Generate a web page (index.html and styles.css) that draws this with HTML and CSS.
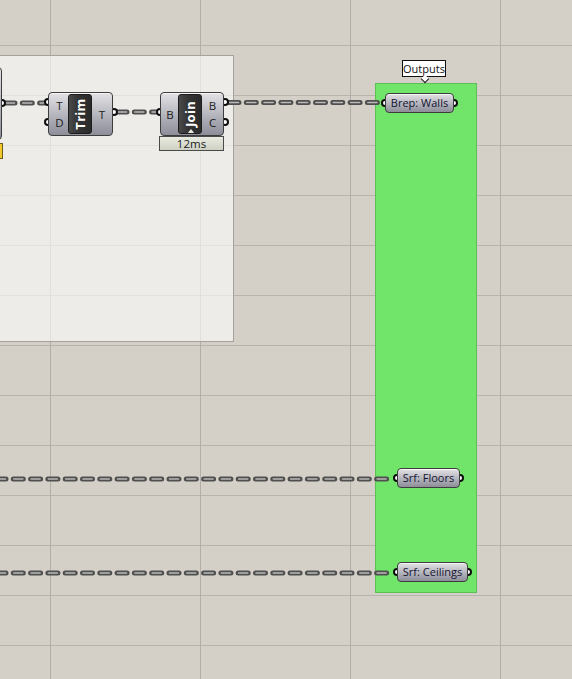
FILE: index.html
```html
<!DOCTYPE html>
<html>
<head>
<meta charset="utf-8">
<link rel="stylesheet" href="styles.css">
</head>
<body>
<div class="canvas">
  <div class="group group-left"></div>
  <div class="group group-green"></div>

  <svg class="wires" width="572" height="679" viewBox="0 0 572 679">
    <g class="wire">
      <line x1="5" y1="103" x2="45" y2="103"/>
      <line x1="117" y1="112" x2="157" y2="112"/>
      <line x1="229" y1="102.5" x2="382" y2="102.5"/>
      <line x1="-4" y1="479" x2="393" y2="479"/>
      <line x1="-4" y1="573" x2="393" y2="573"/>
    </g>
    <g class="wire-in">
      <line x1="5" y1="103" x2="45" y2="103"/>
      <line x1="117" y1="112" x2="157" y2="112"/>
      <line x1="229" y1="102.5" x2="382" y2="102.5"/>
      <line x1="-4" y1="479" x2="393" y2="479"/>
      <line x1="-4" y1="573" x2="393" y2="573"/>
    </g>
  </svg>

  <!-- cut-off component at left edge -->
  <div class="node n-left">
    <span class="port" style="left:58px;top:32px"></span>
    <div class="body"></div>
  </div>
  <div class="msg"></div>

  <!-- Trim -->
  <div class="node n-trim">
    <span class="port" style="left:-4px;top:6px"></span>
    <span class="port" style="left:-4px;top:26px"></span>
    <span class="port" style="left:62px;top:16px"></span>
    <div class="body">
      <div class="io in">
        <span>T</span>
        <span>D</span>
      </div>
      <div class="label"><span>Trim</span></div>
      <div class="io out">
        <span>T</span>
      </div>
    </div>
  </div>

  <!-- Join -->
  <div class="node n-join">
    <span class="port" style="left:-4px;top:16px"></span>
    <span class="port" style="left:61px;top:6px"></span>
    <span class="port" style="left:61px;top:26px"></span>
    <div class="body">
      <div class="io in">
        <span>B</span>
      </div>
      <div class="label"><span>Join</span><i class="notch"></i></div>
      <div class="io out">
        <span>B</span>
        <span>C</span>
      </div>
    </div>
    <div class="time">12ms</div>
  </div>

  <!-- Outputs tag -->
  <div class="tag">Outputs</div>

  <!-- params -->
  <div class="node param p-walls">
    <span class="port" style="left:-4px;top:6px"></span>
    <span class="port" style="left:65px;top:6px"></span>
    <div class="body pbody">Brep: Walls</div>
  </div>
  <div class="node param p-floors">
    <span class="port" style="left:-4px;top:6px"></span>
    <span class="port" style="left:59px;top:6px"></span>
    <div class="body pbody">Srf: Floors</div>
  </div>
  <div class="node param p-ceil">
    <span class="port" style="left:-4px;top:6px"></span>
    <span class="port" style="left:67px;top:6px"></span>
    <div class="body pbody">Srf: Ceilings</div>
  </div>
</div>
</body>
</html>
```
FILE: styles.css
```css
html, body {
  margin: 0;
  padding: 0;
  width: 572px;
  height: 679px;
  overflow: hidden;
}

.canvas {
  position: relative;
  z-index: 0;
  width: 572px;
  height: 679px;
  overflow: hidden;
  background-color: #d4d0c8;
  background-image:
    linear-gradient(to right, #b3afa8 0, #b3afa8 1px, transparent 1px),
    linear-gradient(to bottom, #b8b4ad 0, #b8b4ad 1px, transparent 1px);
  background-size: 150px 100%, 100% 50px;
  background-position: 50px 0, 0 45px;
  font-family: "Open Sans", "DejaVu Sans", sans-serif;
}

.group {
  position: absolute;
  box-sizing: border-box;
}

.group-left {
  left: -10px;
  top: 55px;
  width: 244px;
  height: 287px;
  background: rgba(255, 255, 255, 0.6);
  border: 1px solid #a3a19c;
}

.group-green {
  left: 375px;
  top: 83px;
  width: 102px;
  height: 510px;
  background: #71e46a;
  border: 1px solid #5cbf55;
}

.wires {
  position: absolute;
  left: 0;
  top: 0;
}

.wire line {
  stroke: #4f4f4f;
  stroke-width: 5;
  stroke-linecap: round;
  stroke-dasharray: 10 7.3;
}

.wire-in line {
  stroke: #b9b9b7;
  stroke-width: 1.6;
  stroke-linecap: round;
  stroke-dasharray: 9 8.3;
  stroke-dashoffset: -0.5;
}

.node {
  position: absolute;
  z-index: 2;
}

.node .body {
  position: relative;
  z-index: 1;
  box-sizing: border-box;
  width: 100%;
  height: 100%;
  border: 1px solid #3d3d3d;
  border-radius: 4px;
  background: linear-gradient(to bottom, #e2e2e6 0%, #c4c4ca 35%, #a6a6b0 70%, #8e8e9a 100%);
  box-shadow: inset 0 1px 0 rgba(255,255,255,0.7);
}

.port {
  position: absolute;
  z-index: 0;
  box-sizing: border-box;
  width: 8px;
  height: 8px;
  border-radius: 50%;
  background: #fff;
  border: 2px solid #0e0e0e;
}

.n-left {
  left: -60px;
  top: 67px;
  width: 62px;
  height: 73px;
}

.msg {
  position: absolute;
  left: -4px;
  top: 143px;
  width: 7px;
  height: 16px;
  box-sizing: border-box;
  background: #f3c82d;
  border: 1px solid #6b5a1e;
  z-index: 2;
}

.n-trim {
  left: 48px;
  top: 92px;
  width: 65px;
  height: 44px;
}

.n-join {
  left: 160px;
  top: 92px;
  width: 64px;
  height: 44px;
}

.n-trim .body,
.n-join .body {
  display: flex;
  align-items: stretch;
  padding: 1px 0;
}

.io {
  display: flex;
  flex-direction: column;
  justify-content: space-evenly;
  font-size: 11.5px;
  color: #1b1b1b;
  line-height: 13px;
}

.n-trim .io.in { width: 19px; padding-left: 2px; box-sizing: border-box; align-items: center; }
.n-trim .io.out { flex: 1; align-items: center; }
.n-join .io.in { width: 17px; padding-left: 1px; box-sizing: border-box; align-items: center; }
.n-join .io.out { flex: 1; align-items: center; }

.label {
  position: relative;
  width: 24px;
  box-sizing: border-box;
  border: 1px solid #1c1c1c;
  border-radius: 3px;
  background: linear-gradient(to right, #4a4a4a, #343434 40%, #2a2a2a);
  display: flex;
  align-items: center;
  justify-content: center;
  overflow: hidden;
}

.label span {
  display: block;
  transform: rotate(-90deg);
  color: #fff;
  font-weight: bold;
  font-size: 13px;
  letter-spacing: 0.3px;
  white-space: nowrap;
}

.notch {
  position: absolute;
  left: 8px;
  bottom: -1px;
  width: 0;
  height: 0;
  border-left: 4px solid transparent;
  border-right: 4px solid transparent;
  border-bottom: 5px solid #e6e8de;
}

.time {
  position: absolute;
  left: -1px;
  top: 44px;
  width: 65px;
  height: 15px;
  box-sizing: border-box;
  border: 1px solid #4a4a4a;
  background: linear-gradient(to bottom, #e9ebe1, #cdd1c2);
  font-size: 11.5px;
  line-height: 13px;
  text-align: center;
  color: #1b1b1b;
  z-index: 1;
}

.tag {
  position: absolute;
  left: 402px;
  top: 60px;
  width: 44px;
  height: 17px;
  box-sizing: border-box;
  background: #fff;
  border: 1px solid #111;
  font-size: 11px;
  line-height: 15px;
  text-align: center;
  color: #111;
  z-index: 3;
}

.tag::after {
  content: "";
  position: absolute;
  left: 19px;
  top: 15px;
  width: 5px;
  height: 5px;
  background: #fff;
  border-right: 1px solid #111;
  border-bottom: 1px solid #111;
  transform: rotate(45deg);
}

.param { height: 20px; }
.p-walls { left: 385px; top: 93px; width: 69px; }
.p-floors { left: 397px; top: 468px; width: 63px; }
.p-ceil { left: 397px; top: 562px; width: 71px; }

.pbody {
  font-size: 11px;
  line-height: 18px;
  text-align: center;
  color: #141432;
  white-space: nowrap;
}
```
